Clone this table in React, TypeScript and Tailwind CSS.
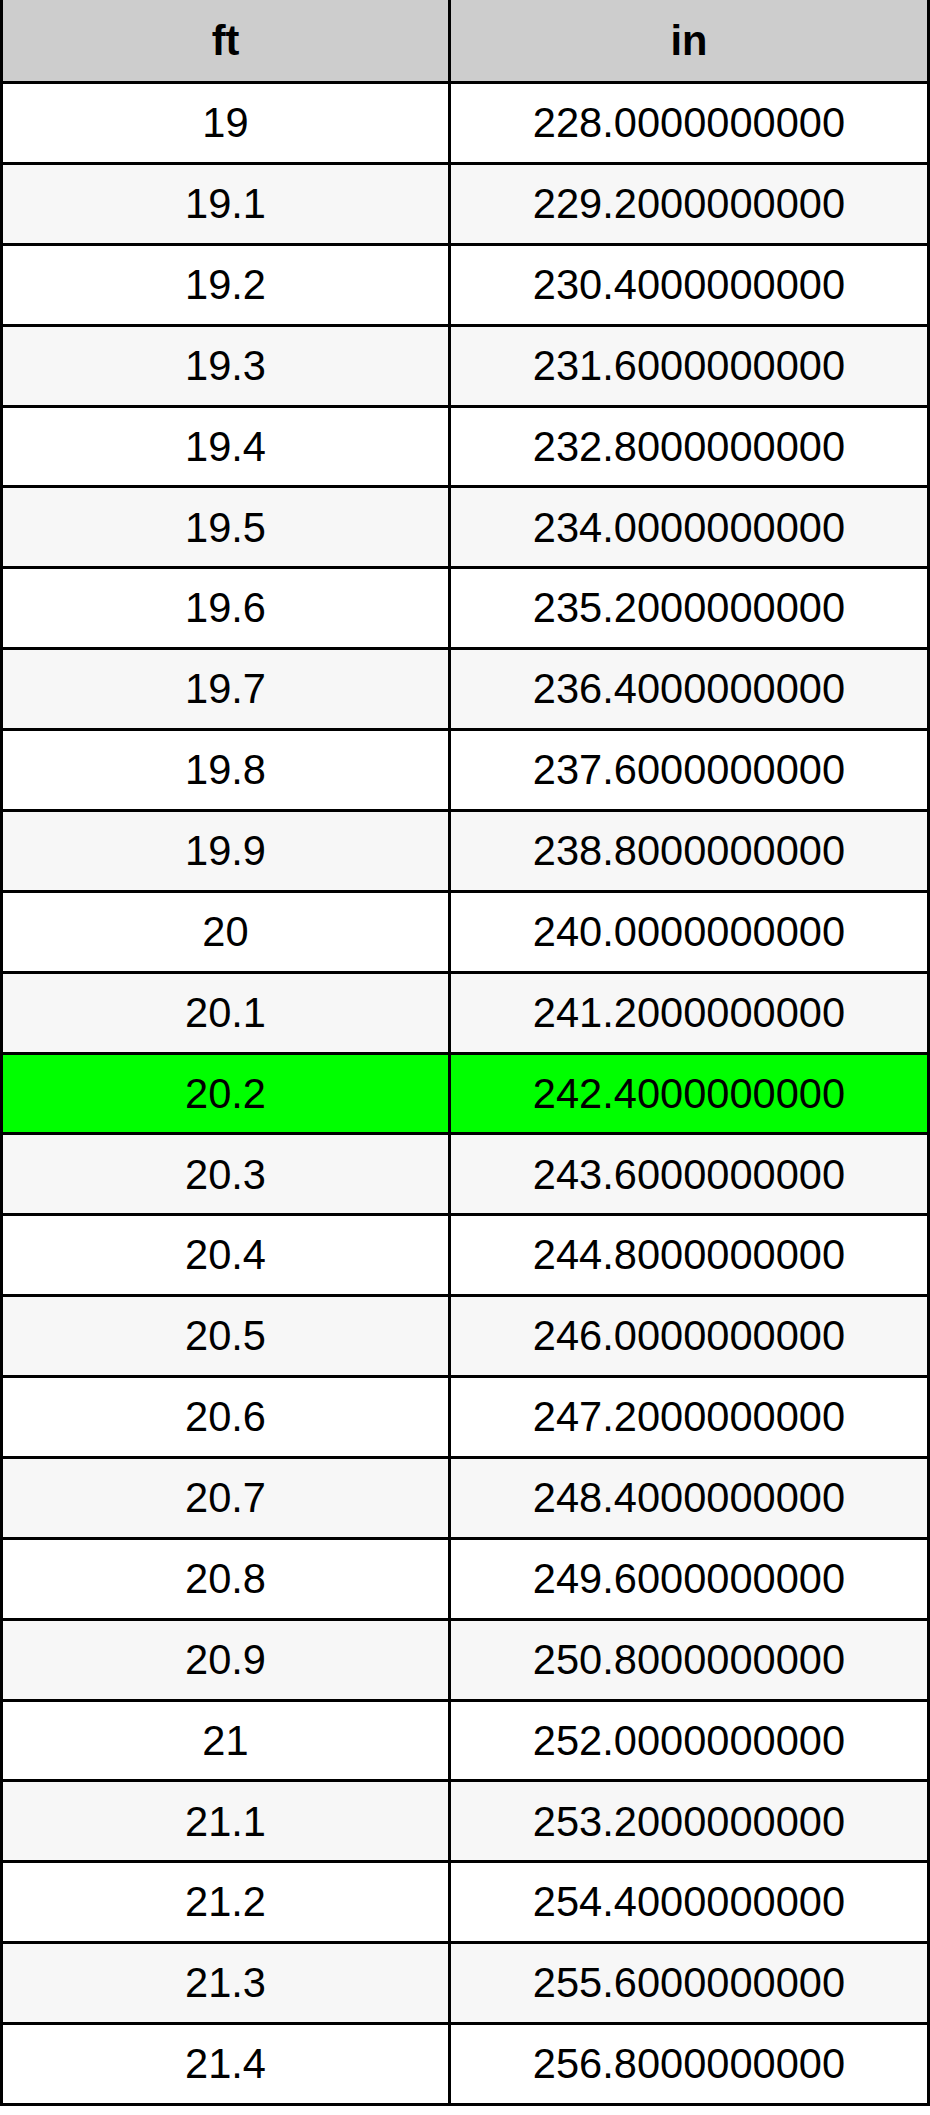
const rows: [string, string][] = [
  ["19", "228.0000000000"],
  ["19.1", "229.2000000000"],
  ["19.2", "230.4000000000"],
  ["19.3", "231.6000000000"],
  ["19.4", "232.8000000000"],
  ["19.5", "234.0000000000"],
  ["19.6", "235.2000000000"],
  ["19.7", "236.4000000000"],
  ["19.8", "237.6000000000"],
  ["19.9", "238.8000000000"],
  ["20", "240.0000000000"],
  ["20.1", "241.2000000000"],
  ["20.2", "242.4000000000"],
  ["20.3", "243.6000000000"],
  ["20.4", "244.8000000000"],
  ["20.5", "246.0000000000"],
  ["20.6", "247.2000000000"],
  ["20.7", "248.4000000000"],
  ["20.8", "249.6000000000"],
  ["20.9", "250.8000000000"],
  ["21", "252.0000000000"],
  ["21.1", "253.2000000000"],
  ["21.2", "254.4000000000"],
  ["21.3", "255.6000000000"],
  ["21.4", "256.8000000000"],
];

function Row({ ft, inches, index }: { ft: string; inches: string; index: number }) {
  const highlight = ft === "20.2";
  const bg = highlight ? "bg-[#00ff00]" : index % 2 === 1 ? "bg-[#f7f7f7]" : "bg-white";
  return (
    <div className={`flex h-[80.88px] border-b-[3px] border-black ${bg}`}>
      <div className="flex w-[448px] items-center justify-center border-r-[3px] border-black">
        {ft}
      </div>
      <div className="flex flex-1 items-center justify-center">{inches}</div>
    </div>
  );
}

export default function App() {
  return (
    <div className="w-[930px] bg-white text-black" style={{ fontFamily: '"Liberation Sans", Arial, sans-serif' }}>
      <div className="border-x-[3px] border-black text-[41.6px] leading-none">
        <div className="flex h-[84px] border-b-[3px] border-black bg-[#cdcdcd] font-bold">
          <div className="flex w-[448px] items-center justify-center border-r-[3px] border-black">ft</div>
          <div className="flex flex-1 items-center justify-center">in</div>
        </div>
        {rows.map(([ft, inches], i) => (
          <Row key={ft} ft={ft} inches={inches} index={i} />
        ))}
      </div>
    </div>
  );
}
